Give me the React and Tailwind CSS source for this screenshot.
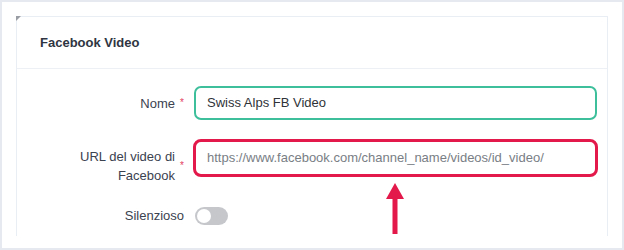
import React from "react"

const font = { fontFamily: '"Liberation Sans", Arial, sans-serif' }

function Label({ children, required, className = "" }) {
  return (
    <div className={`w-[170px] shrink-0 flex items-center justify-end ${className}`}>
      <span className="text-right text-[13px] leading-[19px] text-[#3b4250]">{children}</span>
      {required ? (
        <span className="w-[12px] pl-[5px] text-[10px] leading-none text-[#e3415f]">*</span>
      ) : (
        <span className="w-[3px]" />
      )}
    </div>
  )
}

export default function App() {
  return (
    <div style={font} className="relative w-[624px] h-[250px] bg-white border-2 border-[#e6eaf0] overflow-hidden">
      <div className="mt-[14px] ml-[14px] mr-[14px] relative h-[220px] border-l border-t border-r border-[#e9eef4] rounded-tl-[5px]">
        {/* corner shading */}
        <div className="absolute -left-px -top-px w-0 h-0 border-t-[5px] border-r-[5px] border-t-[#9a9ea4] border-r-transparent" />

        {/* header */}
        <div className="h-[52px] flex items-center pl-[23px] border-b border-[#edf1f5]">
          <span className="text-[13px] font-bold text-[#2f3542]">Facebook Video</span>
        </div>

        {/* Nome */}
        <div className="flex items-center mt-[17px] pr-[10px]">
          <Label required>Nome</Label>
          <div className="ml-[7px] flex-1 h-[34px] border-2 border-[#3dbf9c] rounded-[7px] flex items-center px-[11px]">
            <span className="text-[13px] text-[#2f3338]">Swiss Alps FB Video</span>
          </div>
        </div>

        {/* URL */}
        <div className="flex items-start mt-[19px] pr-[9px]">
          <Label required className="pt-[8px]">
            URL del video di
            <br />
            Facebook
          </Label>
          <div className="ml-[6px] flex-1 h-[38px] border-[3px] border-[#e3184b] rounded-[8px] flex items-center px-[11px]">
            <span className="text-[13px] text-[#797e85]">https://www.facebook.com/channel_name/videos/id_video/</span>
          </div>
        </div>

        {/* Silenzioso */}
        <div className="flex items-center mt-[21px]">
          <Label>Silenzioso</Label>
          <div className="ml-[8px] w-[33px] h-[18px] rounded-full bg-[#c5c7cb] flex items-center px-[2px]">
            <div className="w-[14px] h-[14px] rounded-full bg-white" />
          </div>
        </div>
      </div>

      {/* annotation arrow */}
      <svg className="absolute left-[382px] top-[179px]" width="22" height="55" viewBox="0 0 22 55">
        <polygon points="11,2 20,18 2,18" fill="#e3184b" />
        <rect x="8.5" y="16" width="5" height="37" fill="#e3184b" />
      </svg>
    </div>
  )
}
